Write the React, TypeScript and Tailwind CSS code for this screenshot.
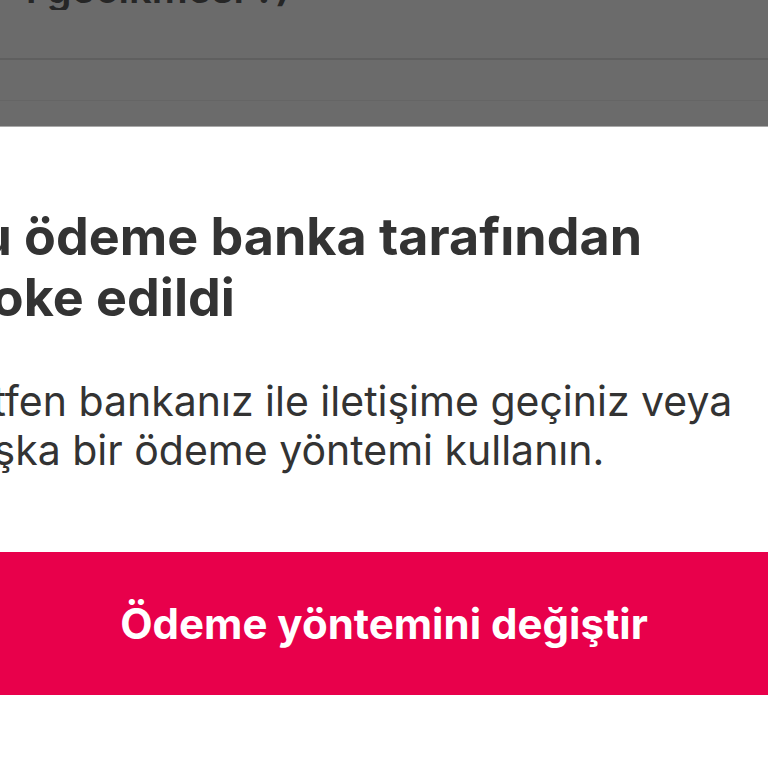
import React from "react";

export default function App() {
  const font = { fontFamily: "Inter, 'Noto Sans', sans-serif" };
  return (
    <div className="relative h-[768px] w-[768px] overflow-hidden bg-white" style={font}>
      {/* dimmed page behind sheet */}
      <div className="flex h-[127px] flex-col bg-[#6b6b6b]">
        <div className="-mt-[32px] h-[42px] overflow-hidden whitespace-nowrap pl-[26px] text-[40px] font-semibold leading-[42px] text-[#262626]">
          ı gecikmesi ?)
        </div>
        <div className="mt-[48px] h-[2px] bg-[#5f5f5f]" />
        <div className="mt-[40px] h-[1px] bg-[#656565]" />
        <div className="flex-1" />
        <div className="h-[1px] bg-[#a9a9a9]" />
      </div>

      {/* sheet */}
      <div className="-ml-[55px] flex flex-col">
        <h1 className="mt-[79px] whitespace-nowrap text-[52px] font-bold leading-[61px] text-[#333333]">
          <span className="block">Bu ödeme banka tarafından</span>
          <span className="block">bloke edildi</span>
        </h1>
        <p className="mt-[49px] whitespace-nowrap text-[41px] font-normal leading-[49px] text-[#333333]">
          <span className="block">Lütfen bankanız ile iletişime geçiniz veya</span>
          <span className="block">başka bir ödeme yöntemi kullanın.</span>
        </p>
      </div>

      <div className="mt-[77px] flex h-[143px] w-full items-center justify-center bg-[#e8004b]">
        <span className="text-[42px] font-bold text-white">Ödeme yöntemini değiştir</span>
      </div>
    </div>
  );
}
